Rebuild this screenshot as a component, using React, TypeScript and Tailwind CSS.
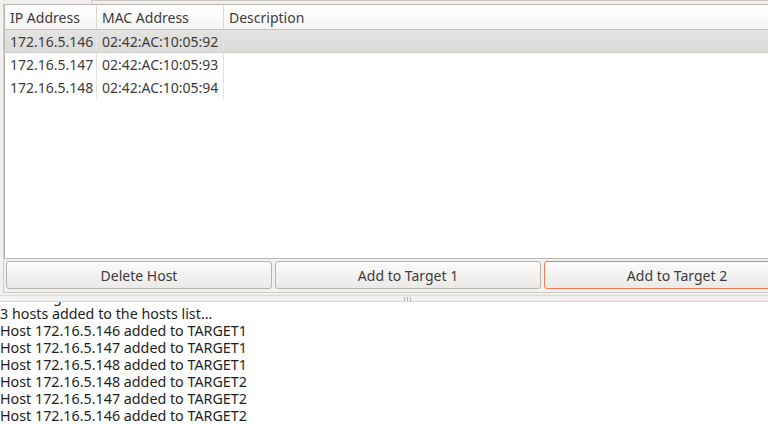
const hosts = [
  { ip: "172.16.5.146", mac: "02:42:AC:10:05:92" },
  { ip: "172.16.5.147", mac: "02:42:AC:10:05:93" },
  { ip: "172.16.5.148", mac: "02:42:AC:10:05:94" },
];

const logLines = [
  "Scanning the whole netmask for 255 hosts...",
  "3 hosts added to the hosts list...",
  "Host 172.16.5.146 added to TARGET1",
  "Host 172.16.5.147 added to TARGET1",
  "Host 172.16.5.148 added to TARGET1",
  "Host 172.16.5.148 added to TARGET2",
  "Host 172.16.5.147 added to TARGET2",
  "Host 172.16.5.146 added to TARGET2",
];

const font = "font-['Noto_Sans','DejaVu_Sans',sans-serif]";

const App = () => {
  return (
    <div
      className={`flex flex-col w-[768px] h-[424px] bg-[#f2f1f0] overflow-hidden text-[14px] text-[#3c3c3c] ${font}`}
    >
      {/* 위쪽 탭 가장자리 */}
      <div className="flex h-[4px] shrink-0">
        <div className="w-[91px]"></div>
        <div className="flex-1 border-l border-t border-[#c9c6c2]"></div>
      </div>

      {/* 호스트 목록 + 버튼 영역 */}
      <div className="flex flex-col h-[289px] shrink-0 ml-[3px] border-l border-b border-[#cfccc8]">
        {/* 호스트 테이블 */}
        <div className="flex flex-col h-[255px] bg-white border-t border-l border-b border-[#b9b6b2]">
          {/* 헤더 */}
          <div className="flex h-[25px] shrink-0 bg-gradient-to-b from-[#ffffff] to-[#f6f5f4] border-b border-[#c5c2be]">
            <div className="w-[92px] pl-[5px] flex items-center border-r border-[#dcd9d5]">
              IP Address
            </div>
            <div className="w-[127px] pl-[5px] flex items-center border-r border-[#dcd9d5]">
              MAC Address
            </div>
            <div className="flex-1 pl-[5px] flex items-center">Description</div>
          </div>
          {/* 행 */}
          {hosts.map((h, i) => (
            <div
              key={h.ip}
              className={`flex h-[23px] shrink-0 ${
                i === 0
                  ? "bg-gradient-to-b from-[#e4e3e1] to-[#dcdbd9] border-b border-[#d0cecb]"
                  : ""
              }`}
            >
              <div className="w-[92px] pl-[5px] flex items-center border-r border-[#e6e4e1]">
                {h.ip}
              </div>
              <div className="w-[127px] pl-[5px] flex items-center border-r border-[#e6e4e1]">
                {h.mac}
              </div>
              <div className="flex-1"></div>
            </div>
          ))}
        </div>

        {/* 버튼 영역 */}
        <div className="flex gap-[3px] pl-[2px] pt-[2px]">
          <button className="w-[266px] h-[28px] shrink-0 rounded-[3px] border border-[#b7b4b0] bg-gradient-to-b from-[#fbfbfb] to-[#eceae8] text-[#3c3c3c]">
            Delete Host
          </button>
          <button className="w-[266px] h-[28px] shrink-0 rounded-[3px] border border-[#b7b4b0] bg-gradient-to-b from-[#fbfbfb] to-[#eceae8] text-[#3c3c3c]">
            Add to Target 1
          </button>
          <button className="w-[266px] h-[28px] shrink-0 rounded-[3px] border border-[#ee7c4f] bg-gradient-to-b from-[#fbfbfb] to-[#eceae8] text-[#3c3c3c]">
            Add to Target 2
          </button>
        </div>
      </div>

      {/* 패널 구분선 */}
      <div className="flex h-[7px] shrink-0 items-center justify-center border-t border-b border-[#dcd9d5] mt-[2px]">
        <div className="flex gap-[2px] ml-[46px]">
          <div className="w-px h-[4px] bg-[#b8b5b1]"></div>
          <div className="w-px h-[4px] bg-[#b8b5b1]"></div>
          <div className="w-px h-[4px] bg-[#b8b5b1]"></div>
        </div>
      </div>

      {/* 로그 영역 */}
      <div className="flex-1 bg-white overflow-hidden text-[#1e1e1e] text-[14.3px]">
        <div className="flex flex-col -mt-[14px]">
          {logLines.map((l, i) => (
            <p key={i} className="h-[17px] leading-[17px] whitespace-nowrap">
              {l}
            </p>
          ))}
        </div>
      </div>
    </div>
  );
};

export default App;
